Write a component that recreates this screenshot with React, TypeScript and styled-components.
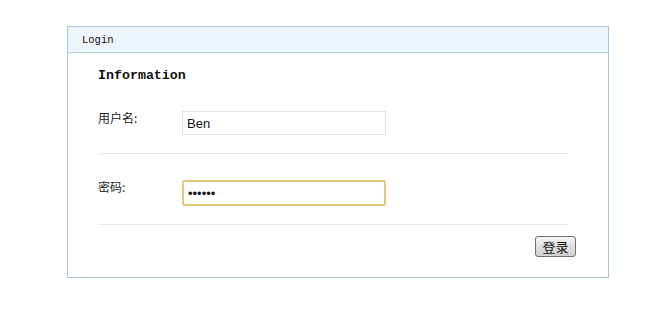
import { createGlobalStyle } from "styled-components";
import styled from "styled-components";

const GlobalStyle = createGlobalStyle`
    html, body {
        margin: 0;
        padding: 0;
        background: #ffffff;
        font-family: "Liberation Sans", "Noto Sans CJK SC", sans-serif;
    }
`

const Page = styled.div`
    padding: 26px 0 0 67px;
`

const Panel = styled.div`
    width: 540px;
    height: 250px;
    border: 1px solid #a9c5dd;
    background: #ffffff;
    display: flex;
    flex-direction: column;
`

const PanelHeader = styled.div`
    height: 25px;
    border-bottom: 1px solid #b9cfe3;
    background: #eef4fc;
    display: flex;
    align-items: center;
    padding-left: 14px;
    font-family: "Liberation Mono", "Noto Sans CJK SC", monospace;
    font-size: 10.5px;
    color: #111;
`

const PanelBody = styled.div`
    display: flex;
    flex-direction: column;
    padding: 15px 32px 0 30px;
`

const SectionTitle = styled.h3`
    margin: 0;
    line-height: 16px;
    font-family: "Liberation Mono", monospace;
    font-size: 13.3px;
    font-weight: bold;
    color: #111;
`

const FieldRow = styled.div<{ $top: number }>`
    display: flex;
    align-items: flex-start;
    margin-top: ${p => p.$top}px;
    width: 470px;
`

const Label = styled.label`
    width: 84px;
    font-family: "Noto Sans CJK SC", sans-serif;
    font-size: 12px;
    line-height: 14px;
    color: #222;
`

const TextInput = styled.input<{ $focused?: boolean }>`
    box-sizing: border-box;
    width: 204px;
    height: ${p => (p.$focused ? 26 : 24)}px;
    padding: 0 4px;
    font-family: "Liberation Sans", sans-serif;
    font-size: 13px;
    color: #111;
    outline: none;
    border: ${p => (p.$focused ? "2px solid #e6c677" : "1px solid #e3e3e3")};
    border-radius: ${p => (p.$focused ? "2px" : "0")};
    background: #fff;
`

const Divider = styled.hr`
    width: 470px;
    margin: 18px 0 0 0;
    border: none;
    border-top: 1px solid #e8e8e8;
`

const Actions = styled.div`
    display: flex;
    justify-content: flex-end;
    margin-top: 11px;
`

const SubmitButton = styled.button`
    box-sizing: border-box;
    width: 41px;
    height: 21px;
    padding: 0;
    border: 1px solid #707070;
    border-radius: 3px;
    background: linear-gradient(#f6f6f6, #dedede 50%, #d0d0d0);
    font-family: "Noto Sans CJK SC", sans-serif;
    font-size: 13px;
    line-height: 18px;
    color: #111;
`

export default function App() {
  return (
    <Page>
      <GlobalStyle />
      <Panel>
        <PanelHeader>Login</PanelHeader>
        <PanelBody>
          <SectionTitle>Information</SectionTitle>
          <FieldRow $top={27}>
            <Label>用户名:</Label>
            <TextInput defaultValue="Ben" />
          </FieldRow>
          <Divider />
          <FieldRow $top={26}>
            <Label>密码:</Label>
            <TextInput type="password" defaultValue="123456" $focused />
          </FieldRow>
          <Divider />
          <Actions>
            <SubmitButton>登录</SubmitButton>
          </Actions>
        </PanelBody>
      </Panel>
    </Page>
  );
}
